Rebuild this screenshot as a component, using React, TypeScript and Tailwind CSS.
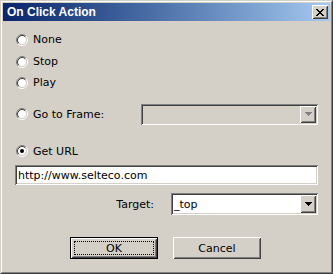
const raised =
  "shadow-[inset_1px_1px_#ffffff,inset_-1px_-1px_#404040,inset_2px_2px_#d4d0c8,inset_-2px_-2px_#808080]";
const sunken =
  "shadow-[inset_1px_1px_#808080,inset_-1px_-1px_#ffffff,inset_2px_2px_#404040,inset_-2px_-2px_#d4d0c8]";

function Radio({ checked = false }: { checked?: boolean }) {
  return (
    <svg width="12" height="12" viewBox="0 0 12 12" className="shrink-0">
      <circle cx="6" cy="6" r="4" fill="#ffffff" />
      <path d="M2.11 9.89 A5.5 5.5 0 0 1 9.89 2.11" stroke="#808080" fill="none" />
      <path d="M9.89 2.11 A5.5 5.5 0 0 1 2.11 9.89" stroke="#ffffff" fill="none" />
      <path d="M2.82 9.18 A4.5 4.5 0 0 1 9.18 2.82" stroke="#404040" fill="none" />
      <path d="M9.18 2.82 A4.5 4.5 0 0 1 2.82 9.18" stroke="#d4d0c8" fill="none" />
      {checked && <circle cx="6" cy="6" r="2" fill="#000000" />}
    </svg>
  );
}

function Arrow({ color }: { color: string }) {
  return (
    <svg width="7" height="4" viewBox="0 0 7 4" shapeRendering="crispEdges">
      <rect x="0" y="0" width="7" height="1" fill={color} />
      <rect x="1" y="1" width="5" height="1" fill={color} />
      <rect x="2" y="2" width="3" height="1" fill={color} />
      <rect x="3" y="3" width="1" height="1" fill={color} />
    </svg>
  );
}

function CloseGlyph() {
  const rows = [
    [0, 1, 6, 7],
    [1, 2, 5, 6],
    [2, 3, 4, 5],
    [3, 4],
    [2, 3, 4, 5],
    [1, 2, 5, 6],
    [0, 1, 6, 7],
  ];
  return (
    <svg width="8" height="7" viewBox="0 0 8 7" shapeRendering="crispEdges">
      {rows.map((r, y) =>
        r.map((x) => <rect key={`${x}-${y}`} x={x} y={y} width="1" height="1" fill="#000" />)
      )}
    </svg>
  );
}

function Option({ label, checked }: { label: string; checked?: boolean }) {
  return (
    <div className="flex items-center gap-[5px]">
      <Radio checked={checked} />
      <span>{label}</span>
    </div>
  );
}

export default function App() {
  return (
    <div className="w-[333px] h-[274px] flex bg-[#d4d0c8] border border-t-[#d4d0c8] border-l-[#d4d0c8] border-r-[#404040] border-b-[#404040] font-['DejaVu_Sans',sans-serif] text-[11px] leading-none text-black">
      <div className="flex-1 flex flex-col p-px border border-t-white border-l-white border-r-[#808080] border-b-[#808080]">
        {/* Title bar */}
        <div className="h-[18px] flex items-center justify-between pl-[4px] pr-[2px] bg-linear-to-r from-[#0a246a] to-[#a6caf0]">
          <span className="text-white font-bold text-[12px] font-['Liberation_Sans',sans-serif]">On Click Action</span>
          <div className={`w-[16px] h-[14px] flex items-center justify-center bg-[#d4d0c8] ${raised}`}>
            <CloseGlyph />
          </div>
        </div>

        {/* Body */}
        <div className="flex flex-col px-[12px] pt-[8px]">
          <div className="h-[21px] flex items-center pl-px">
            <Option label="None" />
          </div>
          <div className="h-[21px] mt-px flex items-center pl-px">
            <Option label="Stop" />
          </div>
          <div className="h-[21px] flex items-center pl-px">
            <Option label="Play" />
          </div>

          <div className="h-[22px] mt-[10px] flex items-center pl-px">
            <div className="w-[125px]">
              <Option label="Go to Frame:" />
            </div>
            <div className={`w-[177px] h-[21px] flex justify-end items-stretch p-[2px] bg-[#d4d0c8] ${sunken}`}>
              <div className={`w-[16px] flex items-center justify-center bg-[#d4d0c8] ${raised}`}>
                <Arrow color="#808080" />
              </div>
            </div>
          </div>

          <div className="h-[22px] mt-[15px] flex items-center pl-px">
            <Option label="Get URL" checked />
          </div>

          <div className={`h-[20px] mt-[3px] flex items-center pl-[3px] bg-white ${sunken}`}>
            http://www.selteco.com
          </div>

          <div className="h-[22px] mt-[8px] flex items-center justify-end">
            <span className="mr-[17px]">Target:</span>
            <div className={`w-[147px] h-[22px] flex items-stretch p-[2px] bg-white ${sunken}`}>
              <div className="flex-1 flex items-center pl-px">_top</div>
              <div className={`w-[16px] flex items-center justify-center bg-[#d4d0c8] ${raised}`}>
                <Arrow color="#000000" />
              </div>
            </div>
          </div>

          <div className="mt-[22px] flex gap-[15px] pl-[55px]">
            <div className="w-[88px] h-[22px] border border-black bg-[#d4d0c8]">
              <div className={`w-full h-full p-[3px] ${raised}`}>
                <div className="w-full h-full border border-dotted border-black flex items-center justify-center">
                  OK
                </div>
              </div>
            </div>
            <div className={`w-[88px] h-[22px] flex items-center justify-center bg-[#d4d0c8] ${raised}`}>
              Cancel
            </div>
          </div>
        </div>
      </div>
    </div>
  );
}
